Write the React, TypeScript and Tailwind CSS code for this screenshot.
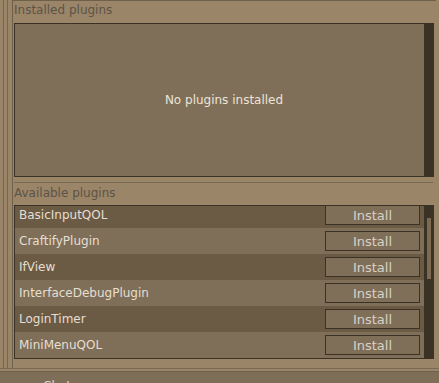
const availablePlugins = [
  "BasicInputQOL",
  "CraftifyPlugin",
  "IfView",
  "InterfaceDebugPlugin",
  "LoginTimer",
  "MiniMenuQOL",
];

export default function App() {
  return (
    <div className="flex h-[383px] w-[439px] flex-col overflow-hidden bg-[#9b8568] font-['DejaVu_Sans',sans-serif] text-[12px] leading-[14px]">
      <div className="flex h-[368px] shrink-0">
        {/* window frame edge */}
        <div className="flex w-[12px] shrink-0">
          <div className="ml-[3px] w-px bg-[#776751]" />
          <div className="ml-[3px] w-px bg-[#776751]" />
        </div>

        <div className="flex w-[424px] flex-col border-l border-t border-[#6f604c] pl-px">
          <div className="h-[22px] pt-[2px] text-[#5c5347]">Installed plugins</div>
          <div className="flex h-[154px] w-[420px] border border-[#3b3226] bg-[#7f6f58]">
            <div className="flex flex-1 items-center justify-center pl-[9px] text-[#ece4d8]">
              No plugins installed
            </div>
            <div className="w-[9px] bg-[#3b3226]" />
          </div>

          <div className="mt-[5px] h-px w-[419px] bg-[#7a6a54]" />
          <div className="mt-[3px] h-[14px] text-[#5c5347]">Available plugins</div>

          <div className="mt-[5px] flex h-[154px] w-[420px] border border-[#3b3226] bg-[#7f6f58]">
            <div className="flex-1 overflow-hidden">
              <ul className="-mt-[4px]">
                {availablePlugins.map((name, index) => (
                  <li
                    key={name}
                    className={`flex h-[26px] items-center justify-between pl-[4px] ${
                      index % 2 === 0 ? "bg-[#6b5b45]" : "bg-[#7f6f58]"
                    }`}
                  >
                    <span className="text-[#e6ded2]">{name}</span>
                    <button
                      type="button"
                      className="mr-[4px] flex h-[20px] w-[95px] items-center justify-center border border-[#3b3226] bg-[#7f6f58] text-[13px] leading-[15px] text-[#d8d1c8]"
                    >
                      Install
                    </button>
                  </li>
                ))}
              </ul>
            </div>
            <div className="w-[9px] bg-[#3b3226]">
              <div className="ml-[3px] mt-[12px] h-[61px] w-[4px] bg-[#7c6a52]" />
            </div>
          </div>
        </div>
      </div>

      <div className="h-px shrink-0 bg-[#7a6a54]" />
      <div className="h-[2px] shrink-0" />
      <div className="flex-1 border-t border-[#6f604c] bg-[#7e6e58] pl-[43px] pt-[7px] text-[#e0d8cc]">
        Chat
      </div>
    </div>
  );
}
